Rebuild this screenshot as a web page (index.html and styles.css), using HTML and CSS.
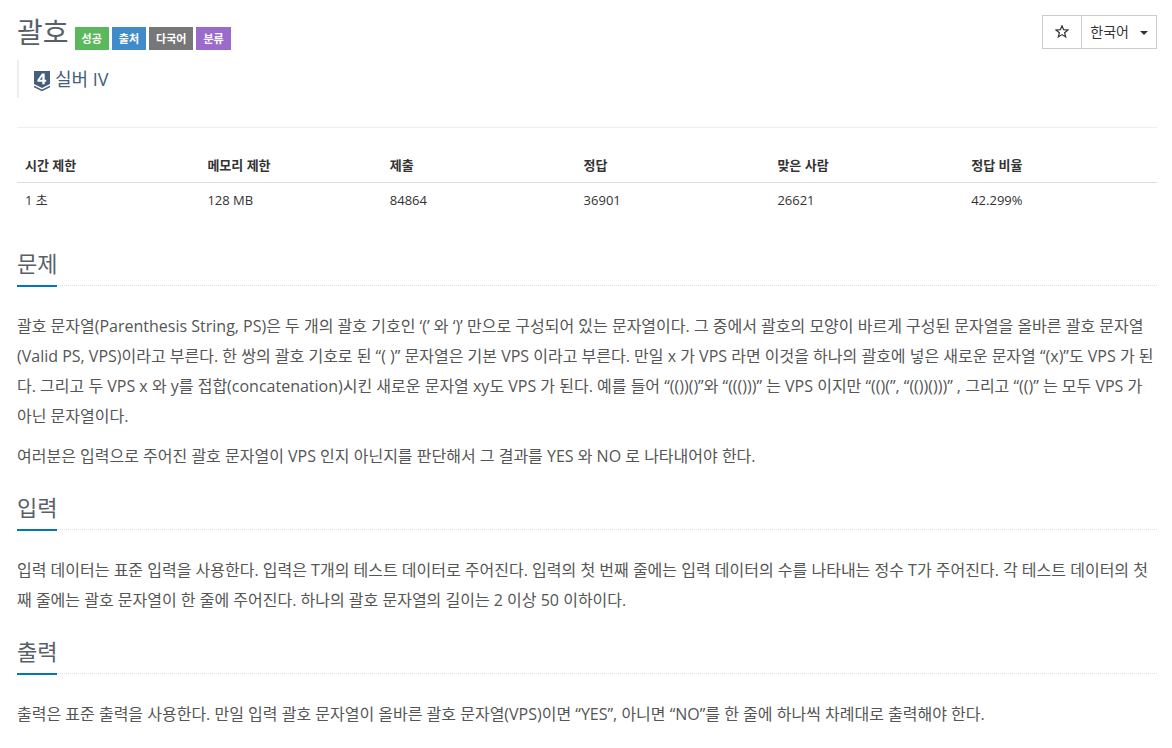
FILE: index.html
```
<!DOCTYPE html>
<html lang="ko">
<head>
	<meta charset="utf-8">
	<title>괄호</title>
	<link rel="stylesheet" href="styles.css">
</head>
<body>
	<div class="page-header">
		<div>
			<div class="title">
				<h1>괄호</h1>
				<span class="label label-success">성공</span>
				<span class="label label-source">출처</span>
				<span class="label label-lang">다국어</span>
				<span class="label label-tag">분류</span>
			</div>
			<blockquote class="tier">
				<svg width="16" height="21" viewBox="0 0 16 21" aria-hidden="true">
					<path fill="#435f7a" d="M0 0h16v13l-8 4-8-4z"/>
					<path fill="none" stroke="#435f7a" stroke-width="1.5" d="M0 15.500l8 4 8-4"/>
					<path fill="#fff" fill-rule="evenodd" d="M8 2.500h2.700v6.300h1.500v2h-1.500v2.400H8.300v-2.400H3.400V9zM8.300 8.800V5.200L5.800 8.800z"/>
				</svg>
				<span>실버 IV</span>
			</blockquote>
		</div>
		<div class="btn-group">
			<button type="button" class="btn btn-star" aria-label="즐겨찾기">
				<svg width="14" height="14" viewBox="0 0 14 14" aria-hidden="true">
					<path fill="none" stroke="#333" stroke-width="1.200" d="M7 .8l1.600 3.900 4.300.3-3.300 2.700 1.100 4.200L7 9.600l-3.700 2.300 1.100-4.200L1.100 5l4.300-.3z"/>
				</svg>
			</button>
			<button type="button" class="btn btn-lang">한국어 <span class="caret"></span></button>
		</div>
	</div>

	<table class="info">
		<thead>
			<tr>
				<th class="short">시간 제한</th>
				<th class="short">메모리 제한</th>
				<th>제출</th>
				<th>정답</th>
				<th>맞은 사람</th>
				<th>정답 비율</th>
			</tr>
		</thead>
		<tbody>
			<tr>
				<td>1 초</td>
				<td>128 MB</td>
				<td>84864</td>
				<td>36901</td>
				<td>26621</td>
				<td>42.299%</td>
			</tr>
		</tbody>
	</table>

	<section>
		<div class="headline"><h2>문제</h2></div>
		<p>괄호 문자열(Parenthesis String, PS)은 두 개의 괄호 기호인 ‘(’ 와 ‘)’ 만으로 구성되어 있는 문자열이다. 그 중에서 괄호의 모양이 바르게 구성된 문자열을 올바른 괄호 문자열(Valid PS, VPS)이라고 부른다. 한 쌍의 괄호 기호로 된 “( )” 문자열은 기본 VPS 이라고 부른다. 만일 x 가 VPS 라면 이것을 하나의 괄호에 넣은 새로운 문자열 “(x)”도 VPS 가 된다. 그리고 두 VPS x 와 y를 접합(concatenation)시킨 새로운 문자열 xy도 VPS 가 된다. 예를 들어 “(())()”와 “((()))” 는 VPS 이지만 “(()(”, “(())()))” , 그리고 “(()” 는 모두 VPS 가 아닌 문자열이다.</p>
		<p>여러분은 입력으로 주어진 괄호 문자열이 VPS 인지 아닌지를 판단해서 그 결과를 YES 와 NO 로 나타내어야 한다.</p>
	</section>

	<section>
		<div class="headline"><h2>입력</h2></div>
		<p>입력 데이터는 표준 입력을 사용한다. 입력은 T개의 테스트 데이터로 주어진다. 입력의 첫 번째 줄에는 입력 데이터의 수를 나타내는 정수 T가 주어진다. 각 테스트 데이터의 첫째 줄에는 괄호 문자열이 한 줄에 주어진다. 하나의 괄호 문자열의 길이는 2 이상 50 이하이다.</p>
	</section>

	<section>
		<div class="headline"><h2>출력</h2></div>
		<p>출력은 표준 출력을 사용한다. 만일 입력 괄호 문자열이 올바른 괄호 문자열(VPS)이면 “YES”, 아니면 “NO”를 한 줄에 하나씩 차례대로 출력해야 한다.</p>
	</section>
</body>
</html>
```
FILE: styles.css
```
*
{
	box-sizing:border-box;
}
body
{
	margin:0;
	padding:15px 15px 0 17px;
	background:#fff;
	color:#333;
	font-family:"Open Sans","Noto Sans CJK KR",sans-serif;
	font-size:13px;
	line-height:20px;
}
h1,h2
{
	margin:0;
	color:#585f69;
	font-weight:normal;
}
.page-header
{
	display:flex;
	justify-content:space-between;
	align-items:flex-start;
	padding-bottom:29px;
	border-bottom:1px solid #eee;
}
.title
{
	display:flex;
	align-items:flex-end;
	gap:3px;
	height:35px;
}
h1
{
	margin-right:3px;
	font-size:28px;
	line-height:35px;
}
.label
{
	padding:0 7px;
	color:#fff;
	font-size:11px;
	font-weight:bold;
	line-height:23px;
}
.label-success
{
	background:#5cb85c;
}
.label-source
{
	background:#428bca;
}
.label-lang
{
	background:#777;
}
.label-tag
{
	background:#9b6bcc;
}
.tier
{
	display:flex;
	align-items:center;
	gap:5px;
	height:38px;
	margin:10px 0 0;
	padding-left:15px;
	border-left:2px solid #eee;
	color:#435f7a;
	font-size:18px;
}
.tier svg
{
	margin-top:4px;
}
.btn-group
{
	display:flex;
}
.btn
{
	display:flex;
	align-items:center;
	height:34px;
	padding:0 8px 2px;
	border:1px solid #ccc;
	background:#fff;
	color:#333;
	font-family:inherit;
	font-size:14px;
}
.btn-star
{
	padding:0 12px;
}
.btn-lang
{
	gap:11px;
	margin-left:-1px;
}
.caret
{
	margin-top:4px;
	border-top:4px solid #333;
	border-left:4px solid transparent;
	border-right:4px solid transparent;
}
.info
{
	width:100%;
	margin-top:20px;
	border-collapse:collapse;
	table-layout:fixed;
}
.info th
{
	width:17%;
	padding:7px 8px;
	border-bottom:1px solid #ddd;
	font-size:13px;
	text-align:left;
}
.info th.short
{
	width:16%;
}
.info td
{
	padding:7px 8px;
}
section
{
	padding-top:30px;
}
section + section
{
	padding-top:10px;
}
.headline
{
	margin-bottom:25px;
	border-bottom:1px dotted #dde1e6;
}
.headline h2
{
	display:inline-block;
	margin-bottom:-2px;
	padding-bottom:5px;
	border-bottom:2px solid #0076bd;
	font-size:22px;
	line-height:33px;
	vertical-align:bottom;
}
p
{
	margin:0 0 10px;
	color:#555;
	font-size:16px;
	line-height:30px;
}
```
